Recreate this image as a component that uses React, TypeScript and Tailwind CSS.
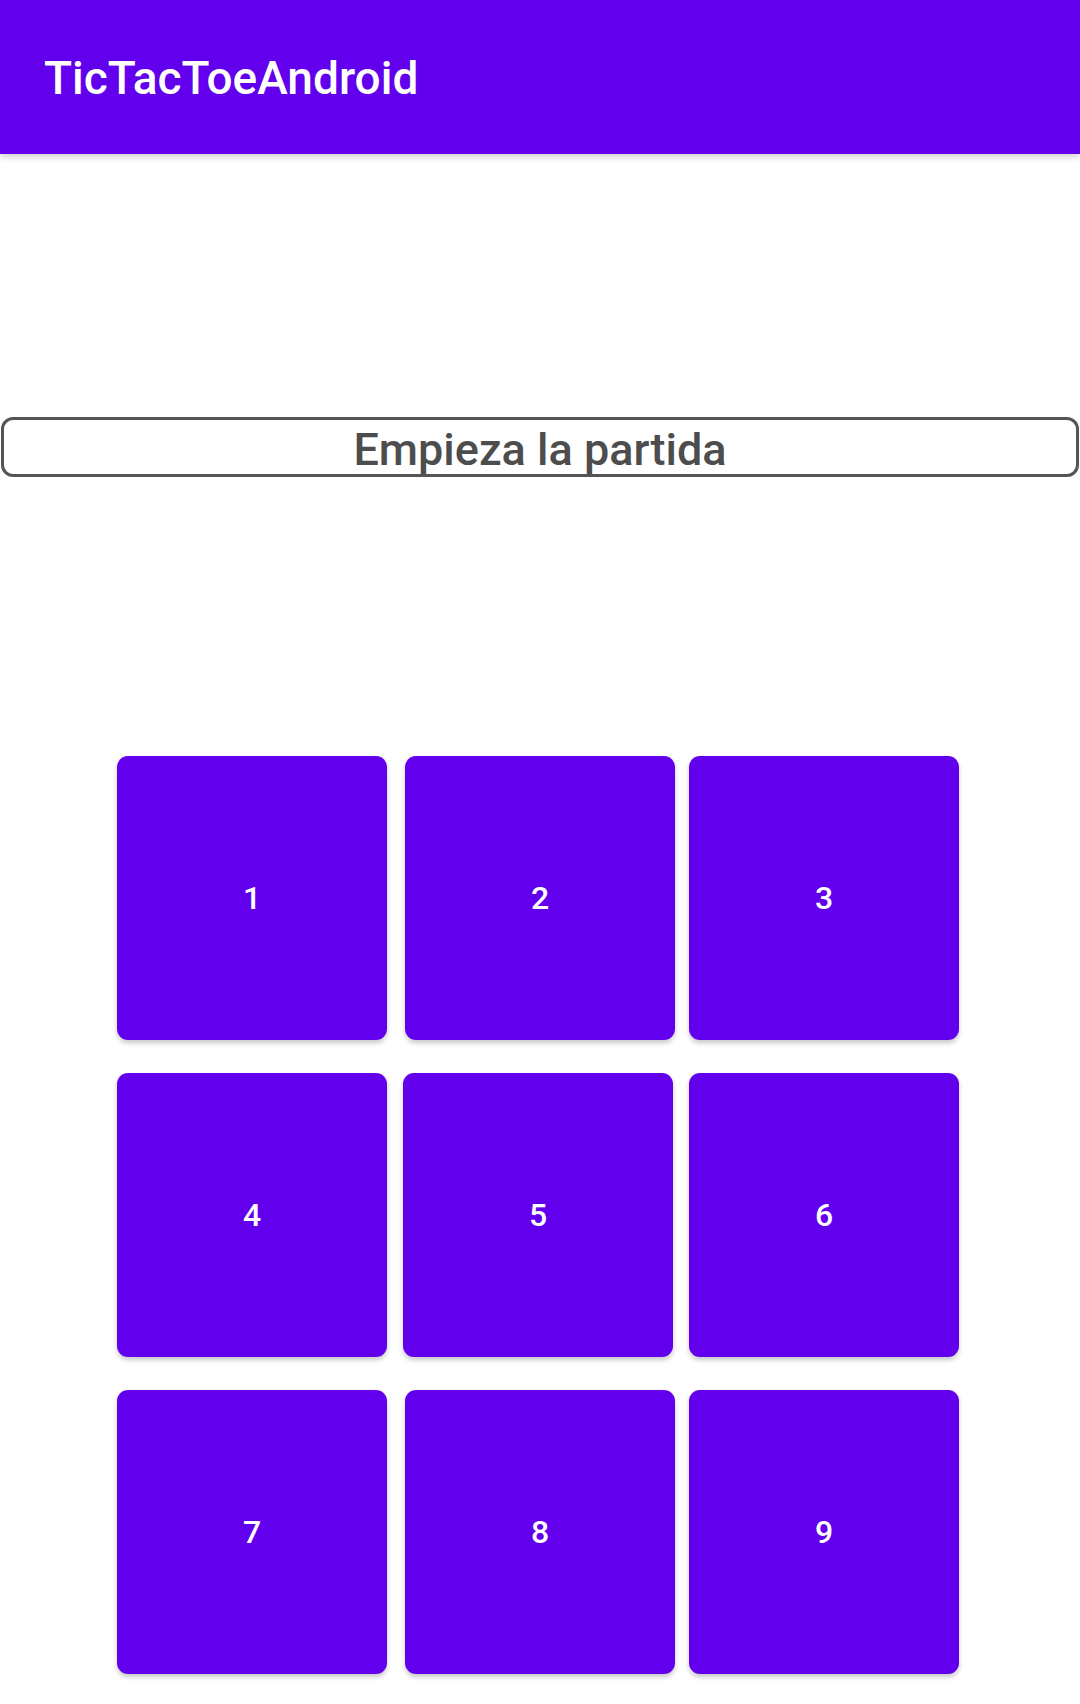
import React from "react";

const Cell = ({ label, className }: { label: string; className?: string }) => (
  <button
    className={
      "w-[270px] h-[284px] rounded-[11px] bg-[#6200ee] text-white text-[32px] font-medium shadow-[0_3px_5px_rgba(0,0,0,0.22)] flex items-center justify-center " +
      (className || "")
    }
  >
    {label}
  </button>
);

const App = () => {
  return (
    <div
      className="min-h-[1704px] w-[1080px] bg-white overflow-hidden"
      style={{ fontFamily: "Roboto, 'Noto Sans', sans-serif" }}
    >
      {/* App bar */}
      <div className="relative z-10 h-[154px] bg-[#6200ee] flex items-center pl-[44px] shadow-[0_3px_7px_rgba(0,0,0,0.18)]">
        <h1 className="text-white text-[46px] font-medium leading-none mt-[2px]">
          TicTacToeAndroid
        </h1>
      </div>

      {/* Start button */}
      <button className="mt-[263px] ml-px w-[1078px] h-[60px] pt-[5px] rounded-[12px] border-[3px] border-[#555555] flex items-center justify-center text-[45px] font-medium text-[#4d4d4d] leading-none">
        Empieza la partida
      </button>

      {/* Board */}
      <div className="mt-[279px] flex flex-col gap-[33px]">
        <div className="flex pl-[117px]">
          <Cell label="1" />
          <Cell label="2" className="ml-[18px]" />
          <Cell label="3" className="ml-[14px]" />
        </div>
        <div className="flex pl-[117px]">
          <Cell label="4" />
          <Cell label="5" className="ml-[16px]" />
          <Cell label="6" className="ml-[16px]" />
        </div>
        <div className="flex pl-[117px]">
          <Cell label="7" />
          <Cell label="8" className="ml-[18px]" />
          <Cell label="9" className="ml-[14px]" />
        </div>
      </div>
    </div>
  );
};

export default App;
